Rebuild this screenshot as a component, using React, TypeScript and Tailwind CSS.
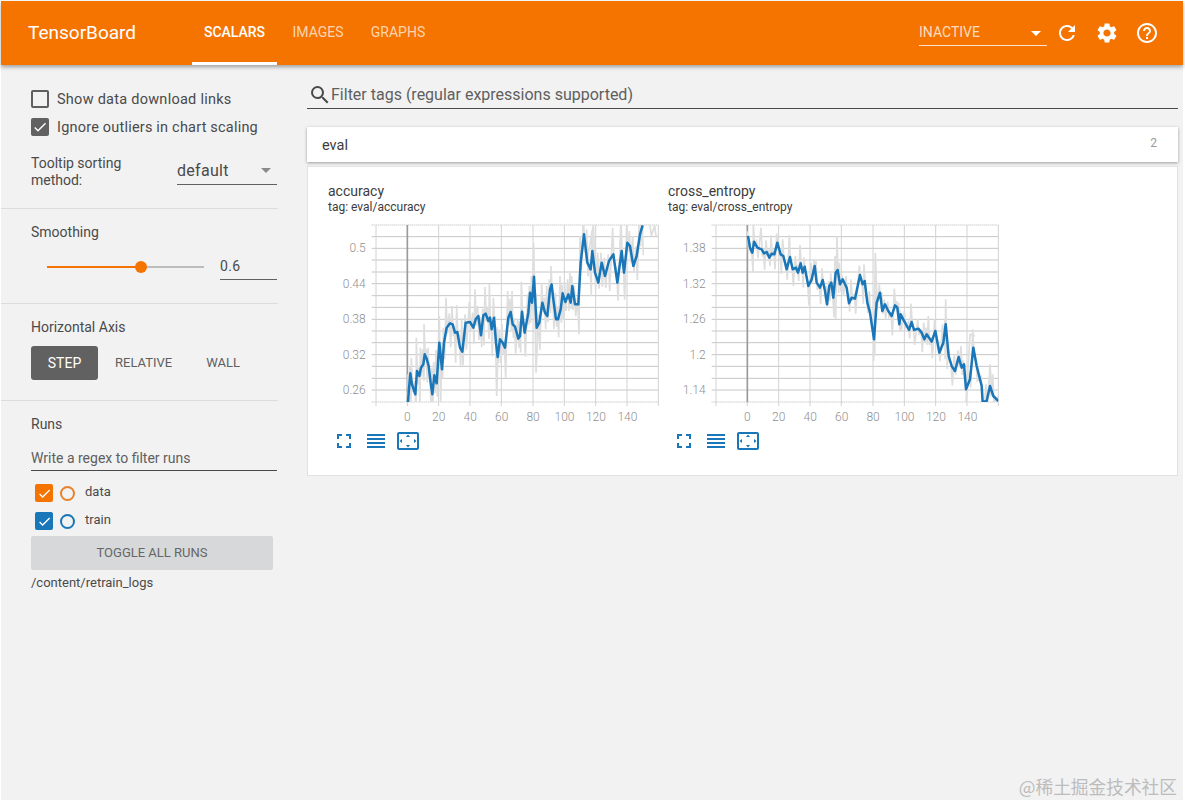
import React from "react";
import { MdRefresh, MdSettings, MdHelpOutline, MdSearch, MdFullscreen, MdReorder, MdSettingsOverscan, MdCheck } from "react-icons/md";

type P = [number, number];

const accuracy: P[] = [[264,678],[266,650],[271,592],[276,625],[286,655],[291,585],[298,600],[303,575],[310,565],[314,535],[320,548],[326,570],[332,620],[337,655],[343,598],[350,622],[358,500],[366,580],[372,500],[380,455],[390,442],[398,445],[405,470],[412,468],[420,515],[427,527],[437,440],[450,438],[460,455],[467,430],[475,420],[483,478],[490,418],[497,413],[505,435],[510,425],[515,460],[522,425],[528,500],[533,543],[540,490],[548,500],[555,515],[565,425],[572,408],[578,445],[585,452],[595,488],[600,480],[606,407],[614,470],[625,410],[630,350],[636,380],[642,302],[650,455],[658,440],[667,380],[675,410],[682,420],[690,340],[695,325],[700,370],[708,430],[714,430],[722,400],[728,352],[736,378],[745,355],[752,380],[757,330],[765,385],[775,385],[782,260],[792,175],[802,260],[812,280],[817,225],[825,290],[835,320],[845,260],[855,300],[867,255],[880,235],[892,320],[905,225],[912,290],[922,200],[930,210],[940,270],[950,240],[960,175],[968,148]];

const entropy: P[] = [[264,180],[270,215],[277,230],[282,197],[292,215],[305,220],[312,232],[320,228],[328,245],[335,233],[343,235],[352,200],[362,235],[370,240],[380,280],[390,243],[398,280],[408,275],[414,290],[422,262],[428,290],[434,272],[445,330],[455,310],[464,270],[470,320],[480,335],[488,312],[495,345],[501,385],[508,330],[514,320],[520,365],[527,290],[533,282],[540,325],[548,310],[560,335],[567,382],[575,365],[585,368],[600,297],[608,325],[614,315],[622,380],[630,410],[642,490],[650,380],[660,350],[667,405],[675,385],[685,405],[695,420],[705,388],[712,395],[718,445],[722,415],[735,440],[747,462],[755,438],[762,462],[775,458],[785,470],[793,490],[800,475],[807,485],[815,497],[826,465],[838,530],[850,500],[857,445],[866,540],[875,570],[885,585],[896,543],[905,575],[912,565],[918,640],[930,610],[940,515],[950,570],[965,630],[968,678],[980,675],[990,630],[1000,660],[1015,675]];

const accuracyAmps = [30, 55, 20, 80, 40, 100, 25, 60, 45, 90];
const entropyAmps = [14, 28, 10, 50, 20, 65, 12, 35, 24, 55];

function rawLine(points: P[], amps: number[]): string {
  const out: P[] = [];
  points.forEach(([x, y], i) => {
    const a = amps[i % amps.length];
    out.push([x - 2, y - a]);
    out.push([x + 2, y + amps[(i + 3) % amps.length] * 0.9]);
  });
  return out.map((p) => p.join(",")).join(" ");
}

const xTicks = [0, 20, 40, 60, 80, 100, 120, 140];
const gridYs = [182, 217, 252, 288, 323, 359, 394, 430, 465, 500, 536, 571, 607, 642];

function Chart({ id, points, amps, labels, extra }: { id: string; points: P[]; amps: number[]; labels: string[]; extra: string[] }) {
  return (
    <svg width="335" height="206" viewBox="24 141 1005 618" className="block">
      <defs>
        <clipPath id={id}>
          <rect x="168" y="147" width="847" height="531" />
        </clipPath>
      </defs>
      {[147, 678].map((y) => (
        <line key={y} x1="155" x2="1015" y1={y} y2={y} stroke="#b5b5b5" strokeWidth="3" strokeDasharray="3 3" />
      ))}
      {gridYs.map((y) => (
        <line key={y} x1="155" x2="1015" y1={y} y2={y} stroke="#c6c6c6" strokeWidth="3" />
      ))}
      {[168, 356, 450, 544, 639, 733, 827, 921, 1015].map((x) => (
        <line key={x} x1={x} x2={x} y1="147" y2="690" stroke="#d2d2d2" strokeWidth="3" />
      ))}
      <line x1="262" x2="262" y1="147" y2="678" stroke="#9a9a9a" strokeWidth="5" />
      <line x1="262" x2="262" y1="678" y2="690" stroke="#d2d2d2" strokeWidth="3" />
      <g clipPath={`url(#${id})`}>
        <polyline points={rawLine(points, amps)} fill="none" stroke="#dedede" strokeWidth="5" />
        {extra.map((e) => (
          <polyline key={e} points={e} fill="none" stroke="#dedede" strokeWidth="5" />
        ))}
        <polyline points={points.map((p) => p.join(",")).join(" ")} fill="none" stroke="#1976b8" strokeWidth="7.5" strokeLinejoin="round" />
      </g>
      {labels.map((l, i) => (
        <text key={l} x="137" y={217 + i * 106.2 + 12} textAnchor="end" fontSize="36" fontWeight="300" fill="#8f8f8f">
          {l}
        </text>
      ))}
      {xTicks.map((t, i) => (
        <text key={t} x={262 + i * 94.3} y="735" textAnchor="middle" fontSize="36" fontWeight="300" fill="#8f8f8f">
          {t}
        </text>
      ))}
    </svg>
  );
}

function ChartCard({ title, tag, ...rest }: { title: string; tag: string; id: string; points: P[]; amps: number[]; labels: string[]; extra: string[] }) {
  return (
    <div className="w-[340px]">
      <div className="text-[14px] leading-[16px] text-[#3c3c3c]">{title}</div>
      <div className="mt-[1px] text-[12px] leading-[15px] text-[#3c3c3c]">{tag}</div>
      <div className="mt-[8px]">
        <Chart {...rest} />
      </div>
      <div className="flex gap-2 pl-1 text-[#1976b8]">
        <MdFullscreen size={24} />
        <MdReorder size={24} />
        <MdSettingsOverscan size={24} />
      </div>
    </div>
  );
}

function Tab({ label, active, cls }: { label: string; active?: boolean; cls: string }) {
  return (
    <div className={`flex h-full items-center border-b-[3px] pt-[1px] text-[14px] ${cls} ${active ? "border-white font-medium text-white" : "border-transparent text-white/70"}`}>
      {label}
    </div>
  );
}

function Divider() {
  return <div className="h-px w-[277px] bg-[#dcdcdc]" />;
}

function RunRow({ name, box, ring }: { name: string; box: string; ring: string }) {
  return (
    <div className="flex h-[28px] items-center pl-[4px]">
      <div className={`flex h-[18px] w-[18px] items-center justify-center rounded-[2px] text-white ${box}`}>
        <MdCheck size={15} />
      </div>
      <div className={`ml-[7px] h-[15px] w-[15px] rounded-full border-2 ${ring}`} />
      <span className="ml-[10px] -mt-[3px] text-[13px] text-[#4a4a4a]">{name}</span>
    </div>
  );
}

export default function App() {
  return (
    <div className="relative h-[801px] overflow-hidden bg-white pt-px pr-[2px] pb-px pl-px font-['Roboto',sans-serif]">
      <div className="flex h-full flex-col bg-[#f2f2f2]">
        <header className="relative z-10 flex h-[64px] shrink-0 items-center bg-[#f57400] pr-[16px] pl-[27px] text-white shadow-[0_2px_4px_rgba(0,0,0,0.35)]">
          <div className="w-[164px] text-[19px] font-normal">TensorBoard</div>
          <nav className="flex h-full items-center">
            <Tab label="SCALARS" active cls="w-[85px] justify-center" />
            <Tab label="IMAGES" cls="w-[79px] justify-center pl-[3px]" />
            <Tab label="GRAPHS" cls="w-[83px] justify-center pl-[1px]" />
          </nav>
          <div className="ml-auto flex items-center">
            <div className="relative flex h-[26px] w-[128px] items-center border-b border-white/80 text-[14px] text-white/75">
              INACTIVE
              <span className="absolute top-[11px] right-[6px] h-0 w-0 border-x-[5px] border-t-[5px] border-x-transparent border-t-white" />
            </div>
            <div className="flex w-[40px] justify-center"><MdRefresh size={24} /></div>
            <div className="flex w-[40px] justify-center"><MdSettings size={24} /></div>
            <div className="flex w-[40px] justify-center"><MdHelpOutline size={24} /></div>
          </div>
        </header>

        <div className="flex min-h-0 flex-1">
          <aside className="w-[306px] shrink-0 text-[#4a4a4a]">
            <div className="flex h-[143px] flex-col pt-[25px] pl-[30px]">
              <label className="flex h-[18px] items-center">
                <span className="h-[18px] w-[18px] rounded-[2px] border-2 border-[#5f5f5f]" />
                <span className="mt-[1px] ml-[8px] text-[14.5px] tracking-[0.26px]">Show data download links</span>
              </label>
              <label className="mt-[10px] flex h-[18px] items-center">
                <span className="flex h-[18px] w-[18px] items-center justify-center rounded-[2px] bg-[#616161] text-white"><MdCheck size={16} /></span>
                <span className="mt-[1px] ml-[8px] text-[14.5px] tracking-[0.2px]">Ignore outliers in chart scaling</span>
              </label>
              <div className="mt-[19px] flex items-start">
                <div className="w-[146px] text-[14px] leading-[17px]">Tooltip sorting<br />method:</div>
                <div className="relative flex h-[30px] w-[100px] items-center border-b border-[#616161] pt-[3px] text-[16px] tracking-[0.3px]">
                  default
                  <span className="absolute top-[13px] right-[6px] h-0 w-0 border-x-[5px] border-t-[5px] border-x-transparent border-t-[#8a8a8a]" />
                </div>
              </div>
            </div>
            <Divider />
            <div className="h-[94px] pt-[15px] pl-[30px]">
              <div className="text-[14px] leading-[16px]">Smoothing</div>
              <div className="mt-[13px] flex items-center">
                <div className="relative ml-[16px] h-[12px] w-[157px]">
                  <div className="absolute top-[5px] left-0 h-[2px] w-[94px] bg-[#f57400]" />
                  <div className="absolute top-[5px] left-[94px] h-[2px] w-[63px] bg-[#bdbdbd]" />
                  <div className="absolute top-0 left-[88px] h-[12px] w-[12px] rounded-full bg-[#f57400]" />
                </div>
                <div className="mt-[1px] ml-[16px] flex h-[26px] w-[57px] items-center border-b border-[#616161] text-[14px] tracking-[0.3px]">0.6</div>
              </div>
            </div>
            <Divider />
            <div className="h-[96px] pt-[15px] pl-[30px]">
              <div className="text-[14px] leading-[16px]">Horizontal Axis</div>
              <div className="mt-[11px] flex h-[34px] items-center text-[13px]">
                <div className="flex h-[34px] w-[67px] items-center justify-center rounded-[3px] bg-[#616161] text-[14px] text-white">STEP</div>
                <div className="ml-[17px] text-[#5f5f5f]">RELATIVE</div>
                <div className="ml-[34px] text-[#5f5f5f]">WALL</div>
              </div>
            </div>
            <Divider />
            <div className="pt-[15px] pl-[30px]">
              <div className="text-[14px] leading-[16px]">Runs</div>
              <div className="mt-[9px] flex h-[30px] w-[246px] items-center border-b border-[#4a4a4a] pt-[5px] text-[14px] text-[#5f5f5f]">Write a regex to filter runs</div>
              <div className="mt-[8px]">
                <RunRow name="data" box="bg-[#f57400]" ring="border-[#e5822b]" />
                <RunRow name="train" box="bg-[#1976b8]" ring="border-[#1976b8]" />
              </div>
              <div className="mt-[1px] flex h-[34px] w-[242px] items-center justify-center rounded-[2px] bg-[#d6d8d9] text-[13px] text-[#666]">TOGGLE ALL RUNS</div>
              <div className="mt-[3px] text-[13px] text-[#4a4a4a]">/content/retrain_logs</div>
            </div>
          </aside>

          <main className="w-[871px] shrink-0 pt-[16px]">
            <div className="flex h-[28px] items-center border-b border-[#4a4a4a] text-[16px] text-[#5f5f5f]">
              <MdSearch size={24} className="ml-[1px] text-[#4a4a4a]" />
              <span className="mt-[1px] -ml-[1px]">Filter tags (regular expressions supported)</span>
            </div>
            <div className="mt-[18px] flex h-[35px] items-center justify-between bg-white pr-[21px] pl-[15px] shadow-[0_1px_3px_rgba(0,0,0,0.35)]">
              <span className="mt-[2px] text-[14.5px] text-[#3c3c3c]">eval</span>
              <span className="-mt-[3px] text-[12px] text-[#9a9a9a]">2</span>
            </div>
            <div className="mt-[4px] flex h-[310px] border border-[#e2e2e2] bg-white pt-[16px] pl-[20px]">
              <ChartCard
                title="accuracy"
                tag="tag: eval/accuracy"
                id="clip-a"
                points={accuracy}
                amps={accuracyAmps}
                labels={["0.5", "0.44", "0.38", "0.32", "0.26"]}
                extra={["525,420 530,660 535,500", "640,380 641,200 648,590 655,440", "358,420 362,678 366,500", "785,260 790,148 800,260 820,148 826,300", "990,148 994,180 1004,148 1008,180"]}
              />
              <ChartCard
                title="cross_entropy"
                tag="tag: eval/cross_entropy"
                id="clip-b"
                points={entropy}
                amps={entropyAmps}
                labels={["1.38", "1.32", "1.26", "1.2", "1.14"]}
                extra={["642,500 641,555 646,230 652,400", "527,430 531,180 536,350", "855,550 857,370 862,580", "918,678 930,475 945,480", "985,660 990,565 996,650"]}
              />
            </div>
          </main>
        </div>
      </div>
      <div className="absolute right-[8px] bottom-[5px] font-['Noto_Sans_CJK_SC',sans-serif] text-[17.7px] leading-[20px] text-[#bcbcbc]">@稀土掘金技术社区</div>
    </div>
  );
}
